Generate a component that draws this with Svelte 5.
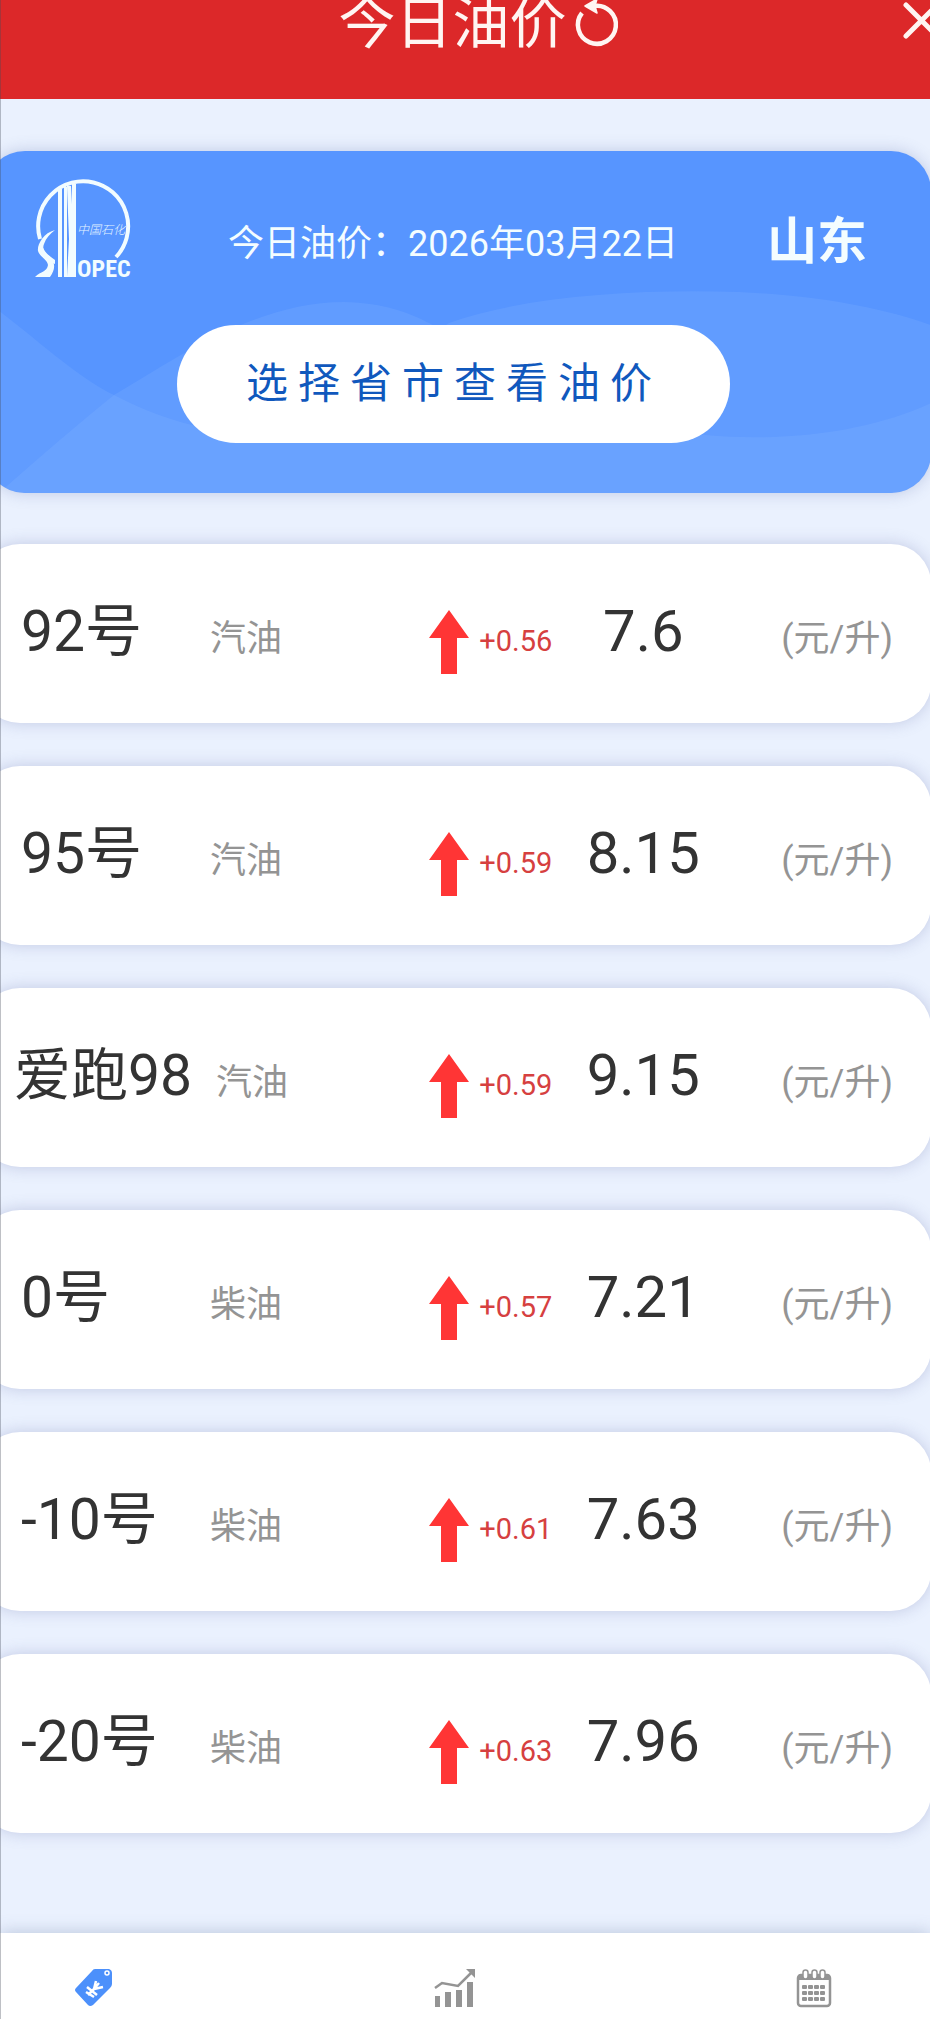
<script>
  const prices = [
    { name: '92号', kind: '汽油', change: '+0.56', price: '7.6' },
    { name: '95号', kind: '汽油', change: '+0.59', price: '8.15' },
    { name: '爱跑98', kind: '汽油', change: '+0.59', price: '9.15', long: true },
    { name: '0号', kind: '柴油', change: '+0.57', price: '7.21' },
    { name: '-10号', kind: '柴油', change: '+0.61', price: '7.63' },
    { name: '-20号', kind: '柴油', change: '+0.63', price: '7.96' }
  ];
  const dotColumns = [10, 16, 22, 28];
  const dotRows = [18, 24, 30];
</script>

<div class="page">
  <header>
    <div class="title">
      <h1>今日油价</h1>
      <button class="plain" aria-label="刷新">
        <svg width="44" height="46" viewBox="0 0 44 46" fill="none">
          <path d="M7 12A19 19 0 1 0 19 5" stroke="#fff5f2" stroke-width="4.500" />
          <path d="M10 5L22 -2L20 5L22 12Z" fill="#fff5f2" stroke="#fff5f2" stroke-width="1.500" stroke-linejoin="round" />
        </svg>
      </button>
    </div>
    <button class="plain close" aria-label="关闭">
      <svg width="34" height="36" viewBox="0 0 34 36"><path d="M2 2L33 33M33 2L2 33" stroke="#fff5f2" stroke-width="5" stroke-linecap="round" /></svg>
    </button>
  </header>

  <main>
    <section class="banner">
      <svg class="waves" viewBox="0 0 946 342" preserveAspectRatio="none" aria-hidden="true">
        <path d="M0 149C55 190 90 225 129 244C180 270 230 285 300 284C380 270 420 200 464 172C540 145 650 138 754 141C840 145 900 158 946 174V342H0Z" />
        <path d="M0 354C45 315 90 275 129 244C190 208 270 151 359 151C400 152 425 162 444 172C540 220 620 275 720 284C810 292 890 278 946 252V342H0Z" />
      </svg>
      <div class="info">
        <svg class="logo" width="96" height="100" viewBox="0 0 96 100" role="img" aria-label="中国石化 SINOPEC">
          <path d="M5 60A45 45 0 1 1 81 78" fill="none" stroke="#f2fcff" stroke-width="4" />
          <path d="M20 51C8 54 2 66 3 72C5 78 12 80 13 86C12 93 6 92 0 98H15C20 91 21 84 15 78C9 73 7 70 9 65C11 59 15 55 20 51Z" fill="#f2fcff" />
          <path d="M7 66C9 73 14 77 20 81V85C12 82 5 75 5 67Z" fill="#f2fcff" />
          <path d="M23 10H27V98H23ZM29 8H32V98H29ZM37 5H41V98H37ZM32 7H36L41 98H32L34 60Z" fill="#f2fcff" />
          <text x="42" y="98" class="mark">OPEC</text>
          <text x="42" y="55" class="script">中国石化</text>
        </svg>
        <p class="date">今日油价：2026年03月22日</p>
        <h2>山东</h2>
      </div>
      <button class="choose">选择省市查看油价</button>
    </section>

    <ul>
      {#each prices as item}
        <li>
          <span class="name" class:long={item.long}>{item.name}</span>
          <span class="kind">{item.kind}</span>
          <span class="change">
            <svg width="40" height="64" viewBox="0 0 40 64" aria-hidden="true"><path d="M20 0L40 28H28V64H12V28H0Z" fill="#ff3535" /></svg>
            {item.change}
          </span>
          <strong>{item.price}</strong>
          <span class="unit">(元/升)</span>
        </li>
      {/each}
    </ul>
  </main>

  <nav>
    <button class="plain" aria-label="油价">
      <svg width="38" height="38" viewBox="0 0 38 38">
        <path d="M20 0H34Q37 1 37 4V15Q37 17 35 19L18 36Q15 38 13 36L1 23Q-1 21 1 19L17 2Q18 0 20 0Z" fill="#4c90fb" />
        <circle cx="32" cy="4" r="2" fill="#4c90fb" stroke="#fff" stroke-width="1.500" />
        <path d="M21 12L19 20L28 18M19 20L13 26M12 18L22 26M11 23L19 28M19 20L24 14" fill="none" stroke="#fff" stroke-width="2.500" />
      </svg>
    </button>
    <button class="plain" aria-label="走势">
      <svg width="42" height="38" viewBox="0 0 42 38" fill="#949494">
        <path d="M1 27H6V38H1ZM11 23H17V38H11ZM22 21H28V38H22ZM33 13H39V38H33Z" />
        <path d="M1 19L8 14L24 17L37 4" fill="none" stroke="#949494" stroke-width="2.500" />
        <path d="M32 0H41V9Z" />
      </svg>
    </button>
    <button class="plain" aria-label="日历">
      <svg width="34" height="38" viewBox="0 0 34 38">
        <rect x="1" y="6" width="32" height="31" rx="3" fill="#fff" stroke="#949494" stroke-width="2.500" />
        <path d="M1 11V8Q1 5 4 5H30Q33 5 33 8V11Z" fill="#949494" />
        <g fill="#fff" stroke="#949494" stroke-width="1.500">
          <rect x="6" y="1" width="5" height="9" rx="2.500" /><rect x="15" y="1" width="5" height="9" rx="2.500" /><rect x="23" y="1" width="5" height="9" rx="2.500" />
        </g>
        {#each dotRows as y}
          {#each dotColumns as x}
            <rect x={x - 5} y={y - 2} width="5" height="4" rx="1" fill="#949494" />
          {/each}
        {/each}
      </svg>
    </button>
  </nav>
</div>

<style>
  :global(body) {
    margin: 0;
    background: #eaf1fe;
  }
  .page {
    position: relative;
    display: flex;
    flex-direction: column;
    min-height: 100vh;
    overflow: hidden;
    background: #eaf1fe;
    color: #333;
    font-family: Roboto, "Noto Sans CJK SC", sans-serif;
  }
  .page::after {
    content: "";
    position: absolute;
    inset: 0 auto 0 0;
    width: 1px;
    background: rgba(70, 75, 90, 0.35);
  }
  h1, h2, p, ul {
    margin: 0;
    padding: 0;
    font-weight: 400;
  }
  svg {
    display: block;
    overflow: visible;
  }
  .plain {
    padding: 0;
    border: 0;
    background: none;
  }
  header {
    display: grid;
    grid-template-columns: 1fr auto 1fr;
    align-items: start;
    padding: 0 0 51px 27px;
    background: #dc2829;
    color: #fff5f2;
  }
  .title {
    grid-column: 2;
    display: flex;
    gap: 8px;
  }
  h1 {
    font-size: 57px;
    line-height: 48px;
  }
  .close {
    justify-self: end;
    margin: 3px -8px 0 0;
  }
  main {
    flex: 1;
    padding-top: 52px;
  }
  .banner {
    position: relative;
    margin: 0 -1px 51px -15px;
    padding: 28px 64px 50px 50px;
    border-radius: 40px;
    overflow: hidden;
    background: #5795ff;
    box-shadow: 0 0 16px rgba(90, 110, 170, 0.3);
    text-align: center;
  }
  .waves {
    position: absolute;
    inset: 0;
    width: 100%;
    height: 100%;
    fill: rgba(150, 195, 255, 0.16);
  }
  .info {
    position: relative;
    display: flex;
    align-items: center;
    justify-content: space-between;
    height: 100px;
    margin-bottom: 46px;
    color: #f4fdff;
  }
  .date {
    font-size: 36px;
    line-height: 40px;
    white-space: nowrap;
    padding: 30px 0 0 8px;
  }
  h2 {
    font-size: 50px;
    line-height: 56px;
    font-weight: 700;
    padding-top: 26px;
  }
  .mark {
    fill: #f2fcff;
    font: 700 24px "Roboto Condensed", "Liberation Sans Narrow", sans-serif;
  }
  .script {
    fill: #e4f4ff;
    font: italic 300 12px "Noto Sans CJK SC", sans-serif;
  }
  .choose {
    position: relative;
    height: 118px;
    margin-left: 5px;
    padding: 0 68px 10px 69px;
    border: 0;
    border-radius: 59px;
    background: #fff;
    color: #1058bd;
    font: 42px Roboto, "Noto Sans CJK SC", sans-serif;
    letter-spacing: 10px;
  }
  ul {
    display: grid;
    gap: 43px;
    padding-bottom: 100px;
    list-style: none;
  }
  li {
    display: flex;
    align-items: baseline;
    box-sizing: border-box;
    min-height: 179px;
    margin: 0 -1px 0 -20px;
    padding: 53px 38px 40px 20px;
    border-radius: 40px;
    background: #fff;
    box-shadow: 0 0 16px rgba(100, 110, 165, 0.3);
    line-height: 68px;
    white-space: nowrap;
  }
  .name {
    box-sizing: border-box;
    width: 210px;
    padding-left: 21px;
    font-size: 57px;
  }
  .name.long {
    width: 216px;
    padding-left: 14px;
  }
  .kind, .unit {
    color: #949494;
    font-size: 36px;
  }
  .kind {
    flex: 1;
  }
  .change {
    color: #d6403f;
    font-size: 29px;
  }
  .change svg {
    display: inline-block;
    margin-right: 3px;
    vertical-align: -23px;
  }
  strong {
    width: 182px;
    margin-right: 47px;
    font-size: 58px;
    font-weight: 400;
    text-align: center;
  }
  nav {
    display: flex;
    justify-content: space-between;
    padding: 36px 99px 12px 75px;
    background: #fff;
    box-shadow: 0 0 16px rgba(90, 110, 150, 0.35);
  }
</style>
